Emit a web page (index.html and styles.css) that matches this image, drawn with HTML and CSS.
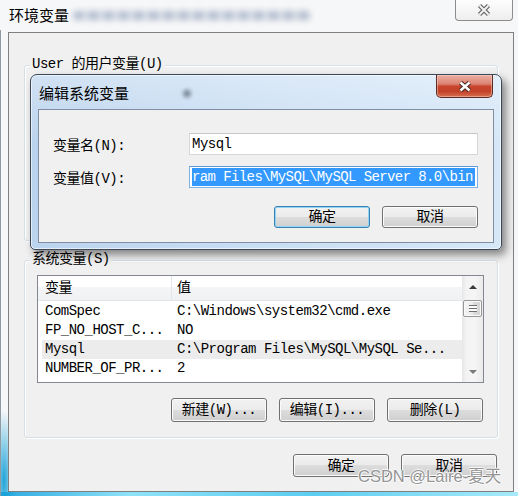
FILE: index.html
```html
<!DOCTYPE html>
<html lang="zh-CN">
<head>
<meta charset="utf-8">
<title>环境变量</title>
<link rel="stylesheet" href="styles.css">
</head>
<body>
<div class="window">
  <div class="titlebar">
    <span class="title">环境变量</span>
    <span class="title-blur"></span>
    <button class="close-outer" aria-label="关闭">
      <svg width="16" height="14" viewBox="0 0 16 14"><path d="M3.5 2.5 L12.5 11.5 M12.5 2.5 L3.5 11.5" stroke="#656565" stroke-width="4.4" fill="none"/><path d="M3.5 2.5 L12.5 11.5 M12.5 2.5 L3.5 11.5" stroke="#f3f3f3" stroke-width="2" fill="none"/></svg>
    </button>
  </div>
  <div class="client">
    <div class="group group-user">
      <span class="group-label">User 的用户变量(U)</span>
    </div>
    <div class="group group-sys">
      <span class="group-label">系统变量(S)</span>
      <div class="listview">
        <div class="lv-main">
          <div class="lv-header"><div class="c1">变量</div><div class="c2">值</div></div>
          <div class="lv-rows">
            <div class="lv-row"><span class="c1">ComSpec</span><span class="c2">C:\Windows\system32\cmd.exe</span></div>
            <div class="lv-row"><span class="c1">FP_NO_HOST_C...</span><span class="c2">NO</span></div>
            <div class="lv-row selected"><span class="c1">Mysql</span><span class="c2">C:\Program Files\MySQL\MySQL Se...</span></div>
            <div class="lv-row"><span class="c1">NUMBER_OF_PR...</span><span class="c2">2</span></div>
          </div>
        </div>
        <div class="scrollbar">
          <div class="sb-btn"><span class="arrow-up"></span></div>
          <div class="sb-thumb"><span class="grip"></span></div>
          <div class="sb-space"></div>
          <div class="sb-btn"><span class="arrow-down"></span></div>
        </div>
      </div>
      <div class="btn-row group-btns">
        <button class="btn">新建(W)...</button>
        <button class="btn">编辑(I)...</button>
        <button class="btn">删除(L)</button>
      </div>
    </div>
    <div class="btn-row bottom-btns">
      <button class="btn">确定</button>
      <button class="btn">取消</button>
    </div>
  </div>

  <div class="dialog">
    <div class="dlg-title">
      <span class="dlg-title-text">编辑系统变量</span>
      <span class="dlg-blur"></span>
      <button class="dlg-close" aria-label="关闭">
        <svg width="16" height="13" viewBox="0 0 16 13"><path d="M3.5 2.5 L12.5 10.5 M12.5 2.5 L3.5 10.5" stroke="#4a2a26" stroke-width="4.6" fill="none"/><path d="M3.5 2.5 L12.5 10.5 M12.5 2.5 L3.5 10.5" stroke="#ffffff" stroke-width="2.4" fill="none"/></svg>
      </button>
    </div>
    <div class="dlg-client">
      <div class="field">
        <label class="field-label">变量名(N):</label>
        <div class="textbox">Mysql</div>
      </div>
      <div class="field">
        <label class="field-label">变量值(V):</label>
        <div class="textbox focus"><span class="sel-text">ram Files\MySQL\MySQL Server 8.0\bin</span></div>
      </div>
      <div class="btn-row dlg-buttons">
        <button class="btn small default">确定</button>
        <button class="btn small">取消</button>
      </div>
    </div>
  </div>

  <div class="watermark">CSDN @Laire-夏天</div>
</div>
</body>
</html>
```

FILE: styles.css
```css
* { box-sizing: border-box; }
html, body { margin: 0; padding: 0; }
body {
  width: 518px;
  height: 496px;
  overflow: hidden;
  font-family: "Liberation Mono", "Noto Sans CJK SC", monospace;
  font-size: 14px;
  letter-spacing: -0.5px;
  color: #000;
}

.window {
  position: relative;
  width: 518px;
  height: 496px;
  display: flex;
  flex-direction: column;
  background:
    linear-gradient(90deg, #8f9aa3 0, #8f9aa3 1px, transparent 1px) 0 30px / 100% 100% no-repeat,
    radial-gradient(ellipse 12px 70px at 4px 480px, rgba(20,160,215,0.95), rgba(20,160,215,0) 100%),
    linear-gradient(90deg, #2aa8df 0, #8fe2f8 25%, #5ccdf1 60%, #a7eafa 100%) left bottom / 100% 4px no-repeat,
    #f6f7f8;
}

/* outer title bar */
.titlebar {
  height: 32px;
  display: flex;
  align-items: flex-start;
  padding-left: 9px;
}
.title {
  font-family: "Noto Sans CJK SC", sans-serif;
  font-size: 15px;
  letter-spacing: 0;
  line-height: 20px;
  margin-top: 5px;
}
.title-blur {
  width: 238px;
  height: 9px;
  margin: 11px 0 0 4px;
  border-radius: 4px;
  background: repeating-linear-gradient(90deg, rgba(110,130,165,0.5) 0 11px, rgba(110,130,165,0.1) 11px 15px);
  filter: blur(3px);
}
.close-outer {
  margin-left: auto;
  margin-right: 5px;
  width: 58px;
  height: 21px;
  padding: 0;
  border: 1px solid #8d8d8d;
  border-top: none;
  border-radius: 0 0 4px 4px;
  background: linear-gradient(#fdfdfd, #eeeeee);
  display: flex;
  align-items: center;
  justify-content: center;
}

/* client area */
.client {
  margin: 0 4px 0 8px;
  height: 460px;
  border: 1px solid #7f7f7f;
  background: #f0f0f0;
  display: flex;
  flex-direction: column;
}

.group {
  margin-left: 15px;
  width: 474px;
  border: 1px solid #d5dfe5;
  border-radius: 3px;
  box-shadow: inset 1px 1px 0 #fff, 1px 1px 0 #fff;
  display: flex;
  flex-direction: column;
}
.group-user { margin-top: 32px; height: 176px; }
.group-sys { margin-top: 19px; height: 178px; }
.group-label {
  display: block;
  width: max-content;
  margin: -11px 0 0 5px;
  padding: 0 2px;
  line-height: 18px;
  background: #f0f0f0;
}

/* list view */
.listview {
  margin: 7px 0 0 12px;
  width: 447px;
  height: 108px;
  border: 1px solid #828790;
  background: #fff;
  display: flex;
}
.lv-main { flex: 1; min-width: 0; }
.lv-header {
  display: flex;
  height: 25px;
  border-bottom: 1px solid #e2e4e7;
  background: linear-gradient(#ffffff 0, #ffffff 44%, #f4f5f7 45%, #eff1f3 100%);
  line-height: 24px;
}
.lv-header .c1 {
  width: 134px;
  padding-left: 7px;
  border-right: 1px solid #e2e5e9;
}
.lv-header .c2 { padding-left: 5px; }
.lv-rows { padding-top: 1px; }
.lv-row {
  display: flex;
  height: 19px;
  line-height: 19px;
  margin-left: 4px;
  white-space: nowrap;
}
.lv-row .c1 { width: 130px; padding-left: 3px; }
.lv-row .c2 { padding-left: 5px; }
.lv-row.selected { background: #ececec; }

.scrollbar {
  width: 21px;
  display: flex;
  flex-direction: column;
  align-items: center;
  background: linear-gradient(90deg, #e6e6e6 0, #f3f3f3 20%, #f5f5f5 60%, #ebebeb 100%);
}
.sb-btn {
  width: 100%;
  height: 22px;
  display: flex;
  align-items: center;
  justify-content: center;
}
.sb-btn:last-child { height: 21px; }
.arrow-up {
  width: 0; height: 0;
  border-left: 4px solid transparent;
  border-right: 4px solid transparent;
  border-bottom: 4px solid #3a3a3a;
}
.arrow-down {
  width: 0; height: 0;
  border-left: 4px solid transparent;
  border-right: 4px solid transparent;
  border-top: 4px solid #7a7a7a;
}
.sb-thumb {
  margin-top: 2px;
  width: 19px;
  height: 17px;
  border: 1px solid #979797;
  border-radius: 2px;
  background: linear-gradient(90deg, #f4f4f4, #ebebeb 50%, #dcdcdc 51%, #d4d4d4);
  box-shadow: inset 0 0 0 1px #fafafa;
  display: flex;
  align-items: center;
  justify-content: center;
}
.grip {
  width: 8px;
  height: 7px;
  background: repeating-linear-gradient(#6e6e6e 0 1px, #fdfdfd 1px 3px);
}
.sb-space { flex: 1; }

/* buttons */
.btn-row {
  display: flex;
  justify-content: flex-end;
  gap: 12px;
}
.group-btns { margin: 15px 14px 0 0; }
.bottom-btns { margin: 16px 16px 0 0; }
.btn {
  width: 96px;
  height: 24px;
  padding: 0;
  font: inherit;
  letter-spacing: inherit;
  color: #000;
  border: 1px solid #707070;
  border-radius: 3px;
  background: linear-gradient(#f2f2f2 0%, #ebebeb 48%, #dddddd 50%, #cfcfcf 100%);
  box-shadow: inset 0 0 0 1px #fbfbfb;
  line-height: 20px;
}
.bottom-btns .btn { height: 23px; }
.btn.small { height: 22px; }
.btn.default {
  border-color: #3c7fb1;
  box-shadow: inset 0 0 0 1px #8fd6f6;
}

/* edit dialog */
.dialog {
  position: absolute;
  left: 30px;
  top: 74px;
  width: 472px;
  height: 176px;
  border: 1px solid #3a4859;
  border-radius: 7px 7px 5px 5px;
  background:
    linear-gradient(rgba(255,255,255,0.35), rgba(255,255,255,0) 40%),
    linear-gradient(100deg, #b9d2ed 0%, #c8ddf3 45%, #d6e7f8 100%);
  box-shadow: 4px 5px 9px rgba(0,0,0,0.45), inset 0 0 0 1px rgba(255,255,255,0.6);
  display: flex;
  flex-direction: column;
}
.dlg-title {
  height: 34px;
  display: flex;
  align-items: flex-start;
  padding-left: 8px;
}
.dlg-title-text {
  font-family: "Noto Sans CJK SC", sans-serif;
  font-size: 15px;
  letter-spacing: 0;
  line-height: 20px;
  margin-top: 8px;
}
.dlg-blur {
  width: 12px;
  height: 13px;
  margin: 12px 0 0 52px;
  border-radius: 50%;
  background: radial-gradient(circle, rgba(70,80,95,0.75), rgba(70,80,95,0) 70%);
  filter: blur(1.5px);
}
.dlg-close {
  margin-left: auto;
  margin-right: 8px;
  width: 57px;
  height: 23px;
  padding: 0;
  border: 1px solid #5b2b24;
  border-top: none;
  border-radius: 0 0 5px 5px;
  background: linear-gradient(#eab0a3 0%, #dd8473 40%, #c9442c 52%, #c2432a 75%, #d8704f 100%);
  box-shadow: inset 0 0 0 1px rgba(255,220,210,0.45);
  display: flex;
  align-items: center;
  justify-content: center;
}
.dlg-client {
  flex: 1;
  margin: 0 7px 6px;
  border: 1px solid #7f8fa3;
  background: #f0f0f0;
  padding: 23px 15px 0 14px;
}
.field {
  display: flex;
  align-items: center;
  height: 22px;
}
.field + .field { margin-top: 11px; }
.field-label { width: 136px; }
.textbox {
  width: 289px;
  height: 22px;
  border: 1px solid #d3d6da;
  border-top-color: #c4c7cc;
  background: #fff;
  padding: 1px 2px;
  line-height: 18px;
  white-space: nowrap;
  overflow: hidden;
}
.textbox.focus { border-color: #7fb2e4; border-top-color: #5a99d8; }
.sel-text {
  display: block;
  background: #3399ff;
  color: #fff;
  letter-spacing: -0.6px;
}
.dlg-buttons { margin-top: 18px; }

/* watermark overlay */
.watermark {
  position: absolute;
  left: 358px;
  top: 465px;
  font-family: "Liberation Sans", "Noto Sans CJK SC", sans-serif;
  font-size: 16.5px;
  letter-spacing: 0;
  line-height: 22px;
  color: #959595;
  text-shadow: 1px 0 0 rgba(255,255,255,0.8), -1px 0 0 rgba(255,255,255,0.8), 0 1px 0 rgba(255,255,255,0.8), 0 -1px 0 rgba(255,255,255,0.8);
  white-space: nowrap;
}
```
